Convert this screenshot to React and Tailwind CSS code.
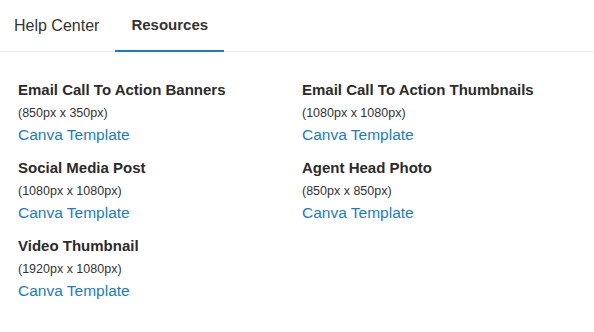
import React from 'react';

const items = [
  { title: 'Email Call To Action Banners', size: '(850px x 350px)' },
  { title: 'Email Call To Action Thumbnails', size: '(1080px x 1080px)' },
  { title: 'Social Media Post', size: '(1080px x 1080px)' },
  { title: 'Agent Head Photo', size: '(850px x 850px)' },
  { title: 'Video Thumbnail', size: '(1920px x 1080px)' },
];

function App() {
  return (
    <div className="w-[594px] h-[332px] bg-white text-[#333] font-['Liberation_Sans',Arial,sans-serif]">
      {/* Tabs */}
      <nav className="flex h-[52px] border-b border-[#eeeeee]">
        <button className="pl-[14px] pr-4 text-[16px] text-[#333]">Help Center</button>
        <button className="px-4 text-[15px] font-bold text-[#333] border-b-2 border-[#1e7bc4] -mb-px">Resources</button>
      </nav>

      {/* Resource grid */}
      <div className="grid grid-cols-[284px_1fr] gap-y-[12px] pl-[18px] pt-[28px]">
        {items.map((it) => (
          <div key={it.title} className="flex flex-col">
            <h3 className="text-[15px] font-bold leading-[20px] text-[#2b2b2b]">{it.title}</h3>
            <span className="mt-[4px] text-[12.5px] leading-[18px] text-[#333]">{it.size}</span>
            <a href="#" className="mt-[2px] text-[15.5px] leading-[22px] text-[#1a7bc9]">Canva Template</a>
          </div>
        ))}
      </div>
    </div>
  );
}

export default App;
